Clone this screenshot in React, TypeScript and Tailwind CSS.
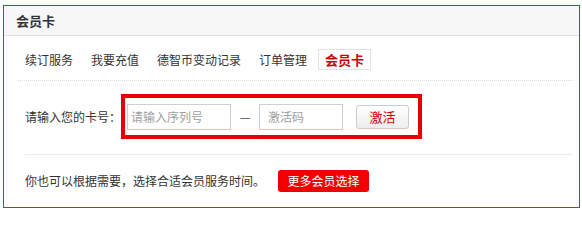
export default function App() {
  const tabs = ["续订服务", "我要充值", "德智币变动记录", "订单管理"];

  return (
    <div className="w-[582px] h-[211px] bg-white pt-[5px] pl-[3px] font-['Noto_Sans_CJK_SC','Noto_Sans',sans-serif] text-[12px] text-[#333]">
      <div className="w-[577px] h-[203px] box-border border-[1px] border-[#dc1e26]">
        {/* Header */}
        <div className="h-[30px] box-border bg-[#f7f7f7] border-b border-[#e3e3e3] pl-[12px] flex items-center">
          <span className="text-[13px] font-bold text-[#333]">会员卡</span>
        </div>

        <div className="pl-[21px] pr-[6px]">
          {/* Tabs */}
          <div className="pt-[13px] pb-[10px] border-b border-dotted border-[#dcdcdc] flex items-center -ml-[7px]">
            {tabs.map((t) => (
              <span
                key={t}
                className="h-[21px] box-border px-[6px] mr-[4px] border border-transparent flex items-center leading-none"
              >
                {t}
              </span>
            ))}
            <span className="h-[21px] box-border px-[6px] border border-[#e2e2e2] flex items-center leading-none font-bold text-[13px] text-[#c8000a]">
              会员卡
            </span>
          </div>

          {/* Card form */}
          <div className="pt-[13px] pb-[15px] border-b border-[#ebebeb] flex items-center">
            <span className="w-[96px] shrink-0">请输入您的卡号：</span>
            <div className="w-[301px] h-[45px] box-border border-4 border-[#e60000] pl-[2px] pr-[9px] flex items-center">
              <input
                placeholder="请输入序列号"
                className="w-[104px] h-[26px] box-border border border-[#cfcfcf] pl-[3px] text-[12px] outline-none placeholder:text-[#a0a0a0]"
              />
              <span className="w-[28px] flex justify-center text-[#444]">—</span>
              <input
                placeholder="激活码"
                className="w-[84px] h-[26px] box-border border border-[#cfcfcf] pl-[8px] text-[12px] outline-none placeholder:text-[#a0a0a0]"
              />
              <button className="ml-[13px] w-[53px] h-[24px] box-border border border-[#cccccc] rounded-[3px] bg-gradient-to-b from-white to-[#eeeeee] text-[13px] text-[#c8000a] leading-none">
                激活
              </button>
            </div>
          </div>

          {/* Footer row */}
          <div className="pt-[15px] flex items-center">
            <span className="w-[253px]">你也可以根据需要，选择合适会员服务时间。</span>
            <button className="w-[91px] h-[22px] rounded-[3px] bg-[#f20000] text-white text-[12px] leading-none">
              更多会员选择
            </button>
          </div>
        </div>
      </div>
    </div>
  );
}
